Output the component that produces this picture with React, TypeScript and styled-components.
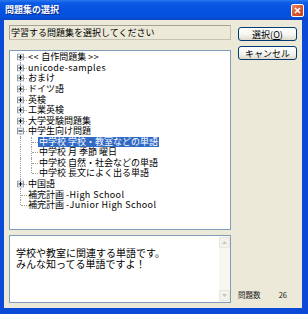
import styled, { createGlobalStyle } from "styled-components";

const GlobalStyle = createGlobalStyle`
  html, body {
    margin: 0;
    padding: 0;
    background: #ffffff;
  }
  body {
    font-family: "Noto Sans CJK JP", "Noto Sans", sans-serif;
  }
`;

type Item = {
  label: string;
  level: 0 | 1;
  toggle?: "plus" | "minus";
  selected?: boolean;
};

const items: Item[] = [
  { label: "<< 自作問題集 >>", level: 0, toggle: "plus" },
  { label: "unicode-samples", level: 0, toggle: "plus" },
  { label: "おまけ", level: 0, toggle: "plus" },
  { label: "ドイツ語", level: 0, toggle: "plus" },
  { label: "英検", level: 0, toggle: "plus" },
  { label: "工業英検", level: 0, toggle: "plus" },
  { label: "大学受験問題集", level: 0, toggle: "plus" },
  { label: "中学生向け問題", level: 0, toggle: "minus" },
  { label: "中学校 学校・教室などの単語", level: 1, selected: true },
  { label: "中学校 月 季節 曜日", level: 1 },
  { label: "中学校 自然・社会などの単語", level: 1 },
  { label: "中学校 長文によく出る単語", level: 1 },
  { label: "中国語", level: 0, toggle: "plus" },
  { label: "補完計画 -High School", level: 0 },
  { label: "補完計画 -Junior High School", level: 0 },
];

// latin runs are a bit wider in the original bitmap font
function splitLatin(text: string) {
  return text.split(/([\x21-\x7e][\x20-\x7e]*)/).map((part, i) =>
    /^[\x21-\x7e]/.test(part) ? <Latin key={i}>{part}</Latin> : part
  );
}

function ToggleBox({ kind }: { kind: "plus" | "minus" }) {
  return (
    <Toggle width="7" height="7" viewBox="0 0 7 7">
      <rect x="0.5" y="0.5" width="6" height="6" fill="#f4f4f0" stroke="#8c9cb0" />
      <line x1="1.5" y1="3.5" x2="5.5" y2="3.5" stroke="#000" />
      {kind === "plus" && <line x1="3.5" y1="1.5" x2="3.5" y2="5.5" stroke="#000" />}
    </Toggle>
  );
}

function TreeRow({ item, index }: { item: Item; index: number }) {
  const rootLast = index === items.length - 1;
  const rootFirst = index === 0;
  const nextLevel = items[index + 1]?.level;
  const childLast = item.level === 1 && nextLevel !== 1;

  return (
    <Row>
      {item.level === 0 ? (
        <Guide $from={rootFirst ? "mid" : "top"} $to={rootLast ? "mid" : "bottom"} $branch>
          {item.toggle && <ToggleBox kind={item.toggle} />}
        </Guide>
      ) : (
        <>
          <Guide $from="top" $to="bottom" />
          <Guide $from="top" $to={childLast ? "mid" : "bottom"} $branch />
        </>
      )}
      <Label $selected={item.selected}>{splitLatin(item.label)}</Label>
    </Row>
  );
}

export default function App() {
  return (
    <>
      <GlobalStyle />
      <Window>
        <TitleBar>
          <Title>問題集の選択</Title>
          <CloseButton>
            <svg width="7" height="7" viewBox="0 0 7 7">
              <path d="M1 1 L6 6 M6 1 L1 6" stroke="#fff" strokeWidth="1.6" />
            </svg>
          </CloseButton>
        </TitleBar>
        <Body>
          <LeftColumn>
            <Prompt>学習する問題集を選択してください</Prompt>
            <Tree>
              {items.map((item, i) => (
                <TreeRow key={item.label} item={item} index={i} />
              ))}
            </Tree>
            <Description>
              <DescriptionText>
                <Line>学校や教室に関連する単語です。</Line>
                <Line>みんな知ってる単語ですよ！</Line>
              </DescriptionText>
              <ScrollBar>
                <ScrollArrow>
                  <svg width="5" height="3" viewBox="0 0 5 3">
                    <path d="M0 3 L2.5 0 L5 3 Z" fill="#c9c7ba" />
                  </svg>
                </ScrollArrow>
                <ScrollTrack />
                <ScrollArrow>
                  <svg width="5" height="3" viewBox="0 0 5 3">
                    <path d="M0 0 L2.5 3 L5 0 Z" fill="#c9c7ba" />
                  </svg>
                </ScrollArrow>
              </ScrollBar>
            </Description>
          </LeftColumn>
          <RightColumn>
            <Buttons>
              <Button>
                選択(<u>O</u>)
              </Button>
              <Button>キャンセル</Button>
            </Buttons>
            <Count>
              <span>問題数</span>
              <span>26</span>
            </Count>
          </RightColumn>
        </Body>
      </Window>
    </>
  );
}

const Window = styled.div`
  width: 308px;
  height: 314px;
  display: flex;
  flex-direction: column;
  background: #0a4ad6;
`;

const TitleBar = styled.div`
  height: 20px;
  display: flex;
  align-items: center;
  justify-content: space-between;
  padding: 0 4px 0 5px;
  background: linear-gradient(
    to bottom,
    #2b78f0 0%,
    #0a5ae6 15%,
    #0552e0 50%,
    #0450da 85%,
    #0a44c4 100%
  );
`;

const Title = styled.span`
  color: #ffffff;
  font-size: 9px;
  font-weight: 700;
  line-height: 12px;
  text-shadow: 1px 1px 0 #0a2a8a;
`;

const CloseButton = styled.div`
  width: 13px;
  height: 13px;
  box-sizing: border-box;
  display: flex;
  align-items: center;
  justify-content: center;
  border: 1px solid #ffffff;
  border-radius: 2px;
  background: linear-gradient(135deg, #ea8a64 0%, #dc5630 50%, #c4401c 100%);
`;

const Body = styled.div`
  flex: 1;
  display: grid;
  grid-template-columns: 222px 59px;
  column-gap: 7px;
  padding: 5px;
  margin: 0 6px 6px 4px;
  background: #ece9d8;
`;

const LeftColumn = styled.div`
  display: flex;
  flex-direction: column;
`;

const Prompt = styled.div`
  height: 15px;
  box-sizing: border-box;
  display: flex;
  align-items: center;
  padding-left: 1px;
  font-size: 9px;
  line-height: 11px;
  color: #000;
  border: 1px solid #c5c2b2;
  border-top-color: #a5a294;
  border-left-color: #a5a294;
  background: #ece9d8;
`;

const Tree = styled.div`
  margin-top: 10px;
  height: 180px;
  box-sizing: border-box;
  padding: 1px 0 0 5px;
  background: #ffffff;
  border: 1px solid #7f9db9;
`;

const Row = styled.div`
  height: 10.57px;
  display: flex;
  align-items: center;
`;

const Guide = styled.div<{ $from: "top" | "mid"; $to: "mid" | "bottom"; $branch?: boolean }>`
  position: relative;
  width: 11px;
  height: 100%;
  flex-shrink: 0;

  &::before {
    content: "";
    position: absolute;
    left: 5px;
    top: ${(p) => (p.$from === "top" ? "0" : "50%")};
    bottom: ${(p) => (p.$to === "bottom" ? "0" : "50%")};
    border-left: 1px dotted #a0a0a0;
  }

  &::after {
    content: "";
    display: ${(p) => (p.$branch ? "block" : "none")};
    position: absolute;
    left: 6px;
    right: -1px;
    top: 50%;
    border-top: 1px dotted #a0a0a0;
  }
`;

const Toggle = styled.svg`
  position: absolute;
  left: 2px;
  top: 50%;
  transform: translateY(-50%);
  z-index: 1;
`;

const Label = styled.span<{ $selected?: boolean }>`
  margin-left: 1px;
  padding: 0 1px;
  font-size: 9px;
  line-height: 10px;
  white-space: pre;
  color: ${(p) => (p.$selected ? "#ffffff" : "#000000")};
  background: ${(p) => (p.$selected ? "#316ac5" : "transparent")};
`;

const Latin = styled.span`
  letter-spacing: 0.4px;
`;

const Description = styled.div`
  margin-top: 5px;
  flex: 1;
  display: flex;
  box-sizing: border-box;
  background: #ffffff;
  border: 1px solid #7f9db9;
`;

const DescriptionText = styled.div`
  flex: 1;
  padding: 11px 0 0 6px;
  font-size: 10px;
  color: #000;
  white-space: nowrap;
  overflow: hidden;
`;

const Line = styled.div`
  height: 11px;
  line-height: 11px;
`;

const ScrollBar = styled.div`
  width: 11px;
  display: flex;
  flex-direction: column;
  background: #f7f6f1;
  padding: 1px 0;
`;

const ScrollArrow = styled.div`
  height: 11px;
  display: flex;
  align-items: center;
  justify-content: center;
  box-sizing: border-box;
  border: 1px solid #e8e6dc;
  border-radius: 2px;
  background: #f3f2ec;
`;

const ScrollTrack = styled.div`
  flex: 1;
`;

const RightColumn = styled.div`
  display: flex;
  flex-direction: column;
  justify-content: space-between;
`;

const Buttons = styled.div`
  display: flex;
  flex-direction: column;
  gap: 5px;
  padding-top: 2px;
`;

const Button = styled.div`
  height: 14px;
  box-sizing: border-box;
  display: flex;
  align-items: center;
  justify-content: center;
  font-size: 9px;
  line-height: 11px;
  color: #000;
  border: 1px solid #003c74;
  border-radius: 3px;
  background: linear-gradient(to bottom, #ffffff 0%, #f3f3ef 60%, #dcd9cb 100%);
`;

const Count = styled.div`
  display: flex;
  justify-content: space-between;
  padding: 0 10px 3px 0;
  font-size: 7.5px;
  line-height: 10px;
  color: #222;
`;
